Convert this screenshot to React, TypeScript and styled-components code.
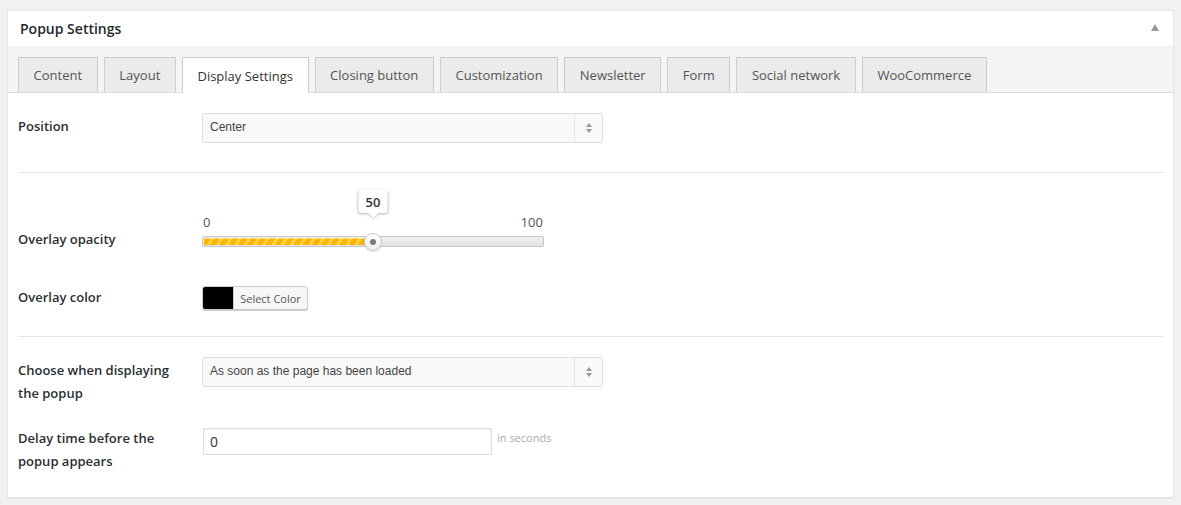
import React from "react";
import styled, { createGlobalStyle } from "styled-components";

const GlobalStyle = createGlobalStyle`
  html, body {
    margin: 0;
    padding: 0;
    background: #f1f1f1;
    font-family: "Open Sans", "Liberation Sans", sans-serif;
    color: #444;
    font-size: 13px;
  }
`;

const Page = styled.div`
  padding: 10px 7px 0 7px;
  height: 505px;
  box-sizing: border-box;
`;

const Postbox = styled.div`
  background: #fff;
  border: 1px solid #e5e5e5;
  box-shadow: 0 1px 1px rgba(0, 0, 0, 0.04);
`;

const Header = styled.div`
  height: 35px;
  display: flex;
  align-items: center;
  justify-content: space-between;
  padding: 0 14px 0 12px;
  border-bottom: 1px solid #eee;
`;

const Title = styled.h2`
  margin: 0;
  font-size: 14px;
  font-weight: 600;
  color: #23282d;
`;

const Toggle = styled.span`
  width: 0;
  height: 0;
  border-left: 4px solid transparent;
  border-right: 4px solid transparent;
  border-bottom: 7px solid #999;
  margin-top: -2px;
`;

const TabStrip = styled.div`
  display: flex;
  gap: 6px;
  padding: 10px 10px 0;
  background: #f4f4f4;
  border-bottom: 1px solid #ddd;
`;

const Tab = styled.div<{ $active?: boolean }>`
  display: flex;
  align-items: center;
  padding: 0 14.6px;
  border: 1px solid #ccc;
  border-bottom: none;
  background: ${({ $active }) => ($active ? "#fff" : "#ebebeb")};
  color: ${({ $active }) => ($active ? "#333" : "#555")};
  font-size: 13px;
  margin-bottom: ${({ $active }) => ($active ? "-1px" : "0")};
  height: ${({ $active }) => ($active ? "35px" : "34px")};
`;

const Body = styled.div`
  padding: 0 10px;
`;

const Row = styled.div<{ $top: number; $bottom?: number; $align?: string }>`
  display: grid;
  grid-template-columns: 184px 1fr;
  align-items: ${({ $align }) => $align || "center"};
  padding-top: ${({ $top }) => $top}px;
  padding-bottom: ${({ $bottom }) => $bottom || 0}px;
`;

const Label = styled.div<{ $shift?: number; $under?: number }>`
  font-weight: 600;
  font-size: 13px;
  line-height: 23px;
  color: #2a2f33;
  margin-top: ${({ $shift }) => $shift || 0}px;
  margin-bottom: ${({ $under }) => $under || 0}px;
`;

const Divider = styled.hr`
  border: none;
  border-top: 1px solid #e5e5e5;
  margin: 0;
`;

const Select = styled.div`
  width: 401px;
  height: 30px;
  box-sizing: border-box;
  border: 1px solid #ddd;
  border-radius: 3px;
  background: #f9f9f9;
  display: flex;
  align-items: center;
  font-family: "Liberation Sans", Arial, sans-serif;
  font-size: 12px;
  color: #444;
`;

const SelectText = styled.span`
  flex: 1;
  padding-left: 7px;
  padding-bottom: 2px;
`;

const SelectArrows = styled.span`
  width: 27px;
  height: 100%;
  border-left: 1px solid #e3e3e3;
  display: flex;
  flex-direction: column;
  align-items: center;
  justify-content: center;
  gap: 2px;

  &::before,
  &::after {
    content: "";
    width: 0;
    height: 0;
    border-left: 3.5px solid transparent;
    border-right: 3.5px solid transparent;
  }
  &::before {
    border-bottom: 4px solid #999;
  }
  &::after {
    border-top: 4px solid #999;
  }
`;

const Slider = styled.div`
  position: relative;
  width: 342px;
  padding-top: 23px;
  padding-bottom: 3px;
`;

const Bubble = styled.div<{ $pos: number }>`
  position: absolute;
  top: 0;
  left: ${({ $pos }) => $pos}%;
  transform: translateX(-50%);
  min-width: 29px;
  height: 23px;
  box-sizing: border-box;
  background: #fff;
  border-radius: 3px;
  box-shadow: 0 1px 3px rgba(0, 0, 0, 0.3);
  font-weight: 600;
  font-size: 13px;
  color: #333;
  display: flex;
  align-items: center;
  justify-content: center;

  &::after {
    content: "";
    position: absolute;
    bottom: -5px;
    left: 50%;
    margin-left: -5px;
    border-left: 5px solid transparent;
    border-right: 5px solid transparent;
    border-top: 5px solid #fff;
    filter: drop-shadow(0 1px 1px rgba(0, 0, 0, 0.2));
  }
`;

const Scale = styled.div`
  display: flex;
  justify-content: space-between;
  font-size: 13px;
  line-height: 18px;
  color: #555;
  padding: 0 1px 0 1px;
`;

const Track = styled.div`
  position: relative;
  margin-top: 5px;
  height: 11px;
  box-sizing: border-box;
  border: 1px solid #c8c8c8;
  border-radius: 2px;
  background: linear-gradient(#f0f0f0, #e2e2e2);
`;

const Fill = styled.div`
  position: absolute;
  left: 1px;
  top: 1px;
  bottom: 1px;
  border-radius: 1px;
  background-color: #ffbf00;
  background-image: repeating-linear-gradient(
    -60deg,
    #ffb400 0px,
    #ffb400 5px,
    #ffd24a 5px,
    #ffd24a 8px
  );
  box-shadow: inset 0 1px 0 rgba(255, 255, 255, 0.4);
`;

const Handle = styled.div`
  position: absolute;
  top: 50%;
  width: 18px;
  height: 18px;
  margin: -9px 0 0 -9px;
  border-radius: 50%;
  background: linear-gradient(#ffffff, #ececec);
  border: 1px solid #c9c9c9;
  box-sizing: border-box;
  box-shadow: 0 1px 2px rgba(0, 0, 0, 0.15);
  display: flex;
  align-items: center;
  justify-content: center;

  &::after {
    content: "";
    width: 6px;
    height: 6px;
    border-radius: 50%;
    background: #7a7a7a;
  }
`;

const ColorButton = styled.div`
  width: 106px;
  height: 24px;
  box-sizing: border-box;
  border: 1px solid #ccc;
  border-radius: 3px;
  display: flex;
  overflow: hidden;
  background: #f7f7f7;
  box-shadow: 0 1px 0 #ccc;
`;

const Swatch = styled.span<{ $color: string }>`
  width: 30px;
  background: ${({ $color }) => $color};
  border-right: 1px solid #ccc;
`;

const ColorText = styled.span`
  flex: 1;
  display: flex;
  align-items: center;
  justify-content: center;
  font-size: 11px;
  color: #555;
`;

const InputWrap = styled.div`
  display: flex;
  align-items: center;
  gap: 5px;
  margin-top: 1px;
`;

const TextInput = styled.div`
  width: 289px;
  height: 27px;
  box-sizing: border-box;
  border: 1px solid #ddd;
  box-shadow: inset 0 1px 2px rgba(0, 0, 0, 0.07);
  margin-left: 1px;
  padding: 0 6px;
  display: flex;
  align-items: center;
  font-size: 14px;
  color: #333;
`;

const Hint = styled.span`
  font-size: 11px;
  color: #aaa;
  align-self: flex-start;
  margin-top: 2px;
`;

const tabs = [
  "Content",
  "Layout",
  "Display Settings",
  "Closing button",
  "Customization",
  "Newsletter",
  "Form",
  "Social network",
  "WooCommerce",
];

export default function App() {
  const opacity = 50;
  return (
    <>
      <GlobalStyle />
      <Page>
        <Postbox>
          <Header>
            <Title>Popup Settings</Title>
            <Toggle />
          </Header>
          <TabStrip>
            {tabs.map((t) => (
              <Tab key={t} $active={t === "Display Settings"}>
                {t}
              </Tab>
            ))}
          </TabStrip>
          <Body>
            <Row $top={20} $bottom={29} $align="start">
              <Label $shift={2}>Position</Label>
              <Select>
                <SelectText>Center</SelectText>
                <SelectArrows />
              </Select>
            </Row>
            <Divider />
            <Row $top={17} $align="end">
              <Label $under={-1}>Overlay opacity</Label>
              <Slider>
                <Bubble $pos={opacity}>{opacity}</Bubble>
                <Scale>
                  <span>0</span>
                  <span>100</span>
                </Scale>
                <Track>
                  <Fill style={{ width: `calc(${opacity}% - 1px)` }} />
                  <Handle style={{ left: `${opacity}%` }} />
                </Track>
              </Slider>
            </Row>
            <Row $top={36} $bottom={26}>
              <Label $shift={-1}>Overlay color</Label>
              <ColorButton>
                <Swatch $color="#000" />
                <ColorText>Select Color</ColorText>
              </ColorButton>
            </Row>
            <Divider />
            <Row $top={20} $align="start">
              <Label $shift={2}>
                Choose when displaying
                <br />
                the popup
              </Label>
              <Select>
                <SelectText>As soon as the page has been loaded</SelectText>
                <SelectArrows />
              </Select>
            </Row>
            <Row $top={22} $bottom={24} $align="start">
              <Label>
                Delay time before the
                <br />
                popup appears
              </Label>
              <InputWrap>
                <TextInput>0</TextInput>
                <Hint>in seconds</Hint>
              </InputWrap>
            </Row>
          </Body>
        </Postbox>
      </Page>
    </>
  );
}
